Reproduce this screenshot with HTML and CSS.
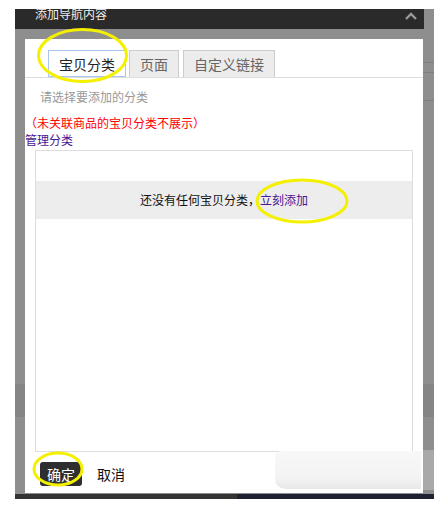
FILE: index.html
```html
<!DOCTYPE html>
<html lang="zh-CN">
<head>
  <meta charset="UTF-8">
  <title>添加导航内容</title>
  <link rel="stylesheet" href="styles.css">
</head>
<body>
  <div class="shot">
    <!-- Kopfzeile des Dialogs -->
    <div class="dlg-head">
      <span class="dlg-title">添加导航内容</span>
      <svg class="dlg-fold" width="12" height="8" viewBox="0 0 12 8">
        <path d="M1 7 L6 2 L11 7" fill="none" stroke="#9a9a9a" stroke-width="2.4"/>
      </svg>
    </div>

    <div class="overlay">
      <div class="dlg">
        <div class="tabs">
          <div class="tab active">宝贝分类</div>
          <div class="tab">页面</div>
          <div class="tab">自定义链接</div>
        </div>

        <p class="hint">请选择要添加的分类</p>
        <p class="warn">（未关联商品的宝贝分类不展示）</p>
        <a class="manage">管理分类</a>

        <div class="list">
          <div class="empty">还没有任何宝贝分类，<a>立刻添加</a></div>
        </div>

        <div class="foot">
          <button class="ok">确定</button>
          <span class="cancel">取消</span>
        </div>
      </div>
    </div>
    <div class="strip"></div>

    <!-- Markierungen und Wasserzeichen -->
    <div class="smudge"></div>
    <svg class="marks" width="419" height="490" viewBox="0 0 419 490">
      <g fill="none" stroke="#f4f000" stroke-width="3">
        <ellipse cx="67.5" cy="46.5" rx="44" ry="26"/>
        <ellipse cx="287" cy="192" rx="45" ry="21"/>
        <ellipse cx="43" cy="460" rx="24" ry="16"/>
      </g>
    </svg>
  </div>
</body>
</html>
```

FILE: styles.css
```css
/* Grundstil */
* { margin: 0; padding: 0; box-sizing: border-box; }
body {
  background: #fff;
  font-family: "Noto Sans CJK SC", "Noto Sans", sans-serif;
  font-size: 12px;
  color: #222;
}
.shot {
  position: relative;
  width: 419px;
  margin: 9px 0 0 15px;
  background: #8e8e8e;
}
.dlg-head {
  display: flex;
  align-items: center;
  justify-content: space-between;
  width: 409px;
  height: 20px;
  padding: 0 7px 0 20px;
  background: #2a2a2a;
  overflow: hidden;
}
.dlg-title {
  margin-top: -10px;
  color: #eee;
  font-size: 12px;
  line-height: 20px;
}
.dlg-fold { margin-top: -6px; }
.overlay {
  padding: 10px 11px 1px 10px;
  background:
    linear-gradient(#7f7f7f, #7f7f7f) 398px 33px / 21px 1px no-repeat,
    linear-gradient(#7f7f7f, #7f7f7f) 398px 43px / 21px 1px no-repeat,
    linear-gradient(#7f7f7f, #7f7f7f) 398px 71px / 21px 1px no-repeat,
    linear-gradient(#a9a9a9, #a9a9a9) 398px 421px / 21px 40px no-repeat,
    linear-gradient(#858585, #858585) 0 355px / 100% 33px no-repeat,
    #8e8e8e;
}
.dlg {
  height: 454px;
  background: #fff;
  display: flex;
  flex-direction: column;
}
.tabs {
  display: flex;
  gap: 3px;
  height: 39px;
  padding: 11px 0 0 23px;
  border-bottom: 1px solid #ddd;
}
.tab {
  height: 27px;
  padding: 0 10px;
  border: 1px solid #ccc;
  border-bottom: none;
  background: #ececec;
  color: #666;
  font-size: 14px;
  line-height: 26px;
}
.tab + .tab + .tab { margin-left: 1px; }
.tab.active {
  border: 1px solid #a9c6ee;
  background: #fff;
  color: #222;
}
.hint {
  margin-top: 10px;
  padding-left: 15px;
  color: #999;
  line-height: 17px;
}
.warn {
  margin-top: 9px;
  color: #f00;
  line-height: 17px;
}
.manage {
  color: #4a1590;
  line-height: 17px;
}
.list {
  height: 302px;
  margin: 2px 10px 0;
  padding-top: 30px;
  border: 1px solid #ddd;
}
.empty {
  height: 38px;
  background: #ededed;
  text-align: center;
  line-height: 38px;
  color: #111;
}
.empty a { color: #4a1590; }
.foot {
  display: flex;
  align-items: center;
  gap: 15px;
  padding: 10px 0 0 15px;
}
.ok {
  width: 42px;
  height: 24px;
  border: none;
  border-radius: 3px;
  background: #2e2e2e;
  color: #fff;
  font-family: inherit;
  font-size: 14px;
}
.cancel {
  font-size: 14px;
  color: #111;
}
.strip {
  height: 5px;
  background: linear-gradient(90deg, #333 0, #333 222px, #1d2131 222px);
}
.smudge {
  position: absolute;
  left: 260px;
  top: 442px;
  width: 146px;
  height: 38px;
  background: linear-gradient(#f8f8f8, #f3f3f3 70%, #e8e8e8);
  border-radius: 6px 0 0 10px;
}
.marks {
  position: absolute;
  left: 0;
  top: 0;
  pointer-events: none;
}
```
